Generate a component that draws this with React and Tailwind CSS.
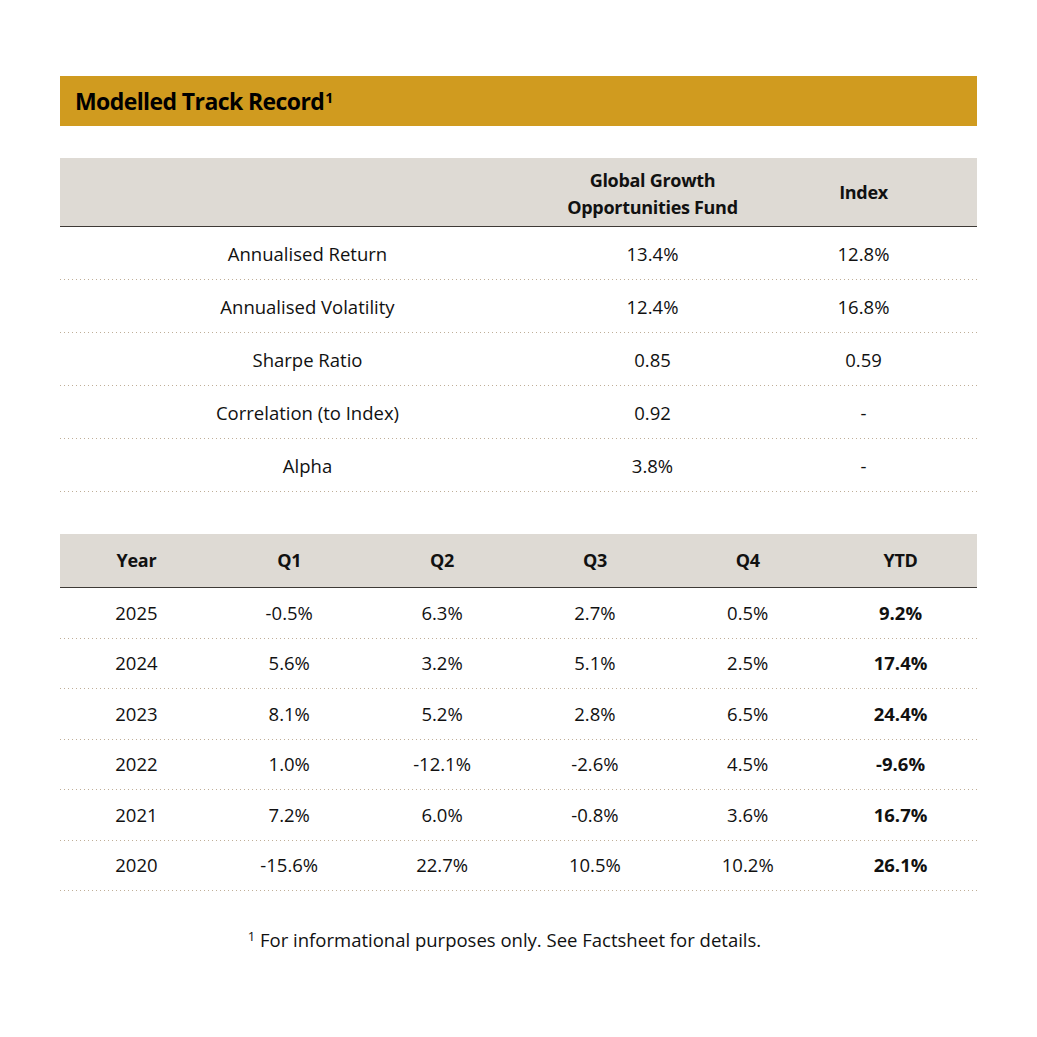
import React from "react";

const stats = [
  { label: "Annualised Return", fund: "13.4%", index: "12.8%" },
  { label: "Annualised Volatility", fund: "12.4%", index: "16.8%" },
  { label: "Sharpe Ratio", fund: "0.85", index: "0.59" },
  { label: "Correlation (to Index)", fund: "0.92", index: "-" },
  { label: "Alpha", fund: "3.8%", index: "-" },
];

const years = [
  ["2025", "-0.5%", "6.3%", "2.7%", "0.5%", "9.2%"],
  ["2024", "5.6%", "3.2%", "5.1%", "2.5%", "17.4%"],
  ["2023", "8.1%", "5.2%", "2.8%", "6.5%", "24.4%"],
  ["2022", "1.0%", "-12.1%", "-2.6%", "4.5%", "-9.6%"],
  ["2021", "7.2%", "6.0%", "-0.8%", "3.6%", "16.7%"],
  ["2020", "-15.6%", "22.7%", "10.5%", "10.2%", "26.1%"],
];

// dotted divider: 1px dot every 4px, like the export
function Dots() {
  return (
    <div className="h-px w-full bg-[linear-gradient(to_right,#bfae98_1px,transparent_1px)] bg-[length:4px_1px] bg-repeat-x" />
  );
}

export default function App() {
  return (
    <div className="min-h-[1037px] bg-white font-['Open_Sans','Liberation_Sans',sans-serif] text-[18.5px] text-[#111]">
      <div className="pt-[76px] px-[60px] w-[1037px]">
        <div className="h-[50px] bg-[#d09b1f] flex items-center pl-[15px]">
          <h1 className="text-[23px] font-bold tracking-[-0.6px] text-black">
            Modelled Track Record<sup className="text-[14px] ml-[1px]">1</sup>
          </h1>
        </div>

        {/* stats table */}
        <div className="mt-[32px]">
          <div className="h-[69px] bg-[#dedad4] grid grid-cols-[495px_195px_1fr] items-center border-b border-[#3e3a36] font-bold text-[18px] leading-[27px] tracking-[-0.3px]">
            <div />
            <div className="text-center pt-[3px]">Global Growth<br />Opportunities Fund</div>
            <div className="text-center">Index</div>
          </div>
          {stats.map((r) => (
            <div key={r.label}>
              <div className="h-[52px] grid grid-cols-[495px_195px_1fr] items-center pt-px">
                <div className="text-center">{r.label}</div>
                <div className="text-center">{r.fund}</div>
                <div className="text-center">{r.index}</div>
              </div>
              <Dots />
            </div>
          ))}
        </div>

        {/* calendar returns */}
        <div className="mt-[42px]">
          <div className="h-[54px] bg-[#dedad4] grid grid-cols-6 items-center border-b border-[#3e3a36] font-bold text-[18px] tracking-[-0.3px]">
            {["Year", "Q1", "Q2", "Q3", "Q4", "YTD"].map((h) => (
              <div key={h} className="text-center">{h}</div>
            ))}
          </div>
          {years.map((row) => (
            <div key={row[0]}>
              <div className="h-[49.5px] grid grid-cols-6 items-center">
                {row.map((v, i) => (
                  <div key={i} className={i === 5 ? "text-center font-bold" : "text-center"}>{v}</div>
                ))}
              </div>
              <Dots />
            </div>
          ))}
        </div>

        <p className="mt-[35px] text-center pr-[28px]">
          <sup className="text-[13px]">1</sup> For informational purposes only. See Factsheet for details.
        </p>
      </div>
    </div>
  );
}
